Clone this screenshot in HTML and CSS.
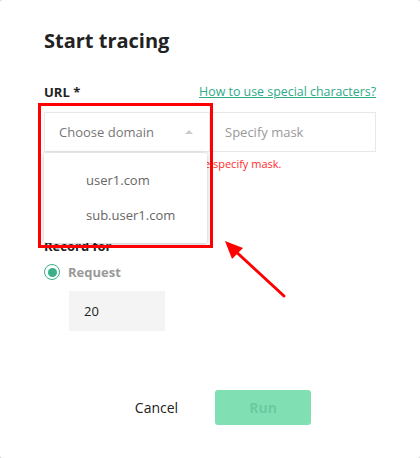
FILE: index.html
```html
<!DOCTYPE html>
<html>
<head>
<meta charset="utf-8">
<link rel="stylesheet" href="styles.css">
</head>
<body>
<div class="dialog">
  <h1 class="title">Start tracing</h1>
  <div class="url-row">
    <span class="label">URL *</span>
    <a class="help" href="#">How to use special characters?</a>
  </div>
  <div class="inputs">
    <div class="select">
      <span>Choose domain</span>
      <span class="caret"></span>
    </div>
    <div class="mask">Specify mask</div>
    <div class="dropdown">
      <div class="item">user1.com</div>
      <div class="item">sub.user1.com</div>
    </div>
    <div class="highlight"></div>
  </div>
  <div class="error">Please specify mask.</div>
  <div class="label record">Record for</div>
  <div class="radio-row">
    <span class="radio"><span class="dot"></span></span>
    <span class="radio-label">Request</span>
  </div>
  <div class="number">20</div>
  <div class="footer">
    <button class="cancel">Cancel</button>
    <button class="run">Run</button>
  </div>
  <svg class="arrow" width="80" height="70" viewBox="0 0 80 70">
    <line x1="62" y1="56" x2="10" y2="8" stroke="#ff0000" stroke-width="3" stroke-linecap="round"/>
    <polygon points="3,1 21,8 10,19" fill="#ff0000"/>
  </svg>
</div>
</body>
</html>
```
FILE: styles.css
```css
html, body {
  margin: 0;
  padding: 0;
  background: #d9d9d9;
}
.dialog {
  position: relative;
  width: 420px;
  height: 458px;
  box-sizing: border-box;
  background: #fff;
  border-radius: 3px;
  padding: 27px 44px 0 44px;
  font-family: "Open Sans", "Noto Sans", sans-serif;
  display: flex;
  flex-direction: column;
}
.title {
  margin: 0;
  font-size: 20px;
  font-weight: 700;
  line-height: 28px;
  color: #222;
}
.url-row {
  margin-top: 28px;
  display: flex;
  justify-content: space-between;
  align-items: center;
  height: 18px;
}
.label {
  font-size: 13px;
  font-weight: 700;
  color: #222;
  line-height: 18px;
}
.help {
  font-size: 12.4px;
  color: #2eaa87;
  text-decoration: underline;
  line-height: 18px;
}
.inputs {
  position: relative;
  margin-top: 11px;
  display: flex;
  height: 40px;
}
.select {
  width: 165px;
  box-sizing: border-box;
  border: 1px solid #e8e8e8;
  border-right: none;
  display: flex;
  align-items: center;
  justify-content: space-between;
  padding: 0 16px 0 14px;
  font-size: 13px;
  color: #777;
  box-shadow: 0 1px 3px rgba(0,0,0,0.08);
}
.caret {
  width: 0;
  height: 0;
  border-left: 4px solid transparent;
  border-right: 4px solid transparent;
  border-bottom: 4px solid #ccc;
}
.mask {
  flex: 1;
  box-sizing: border-box;
  border: 1px solid #e8e8e8;
  display: flex;
  align-items: center;
  padding-left: 15px;
  font-size: 13px;
  color: #999;
}
.dropdown {
  position: absolute;
  left: 0;
  top: 41px;
  width: 163px;
  height: 90px;
  background: #fff;
  border-radius: 2px;
  box-shadow: 0 1px 4px rgba(0,0,0,0.25);
  padding-top: 10px;
  box-sizing: border-box;
  z-index: 2;
}
.item {
  height: 35px;
  line-height: 35px;
  padding-left: 42px;
  font-size: 13px;
  color: #666;
}
.highlight {
  position: absolute;
  left: -6px;
  top: -9px;
  width: 175px;
  height: 145px;
  box-sizing: border-box;
  border: 3px solid #ff0000;
  z-index: 3;
}
.error {
  margin-top: 4px;
  margin-left: 133px;
  font-size: 11px;
  line-height: 16px;
  color: #ff2a2a;
}
.record {
  margin-top: 65px;
}
.radio-row {
  margin-top: 8px;
  display: flex;
  align-items: center;
  height: 18px;
}
.radio {
  width: 16px;
  height: 16px;
  box-sizing: border-box;
  border: 1.5px solid #3aaf8a;
  border-radius: 50%;
  display: flex;
  align-items: center;
  justify-content: center;
}
.dot {
  width: 9px;
  height: 9px;
  border-radius: 50%;
  background: #3aaf8a;
}
.radio-label {
  margin-left: 8px;
  font-size: 13px;
  font-weight: 700;
  color: #999;
}
.number {
  margin-top: 10px;
  margin-left: 25px;
  width: 96px;
  height: 40px;
  background: #f4f4f4;
  box-sizing: border-box;
  padding-left: 15px;
  display: flex;
  align-items: center;
  font-size: 13px;
  color: #222;
}
.footer {
  margin-top: 59px;
  display: flex;
  justify-content: center;
  align-items: center;
  gap: 37px;
  padding-left: 26px;
}
.cancel {
  border: none;
  background: none;
  padding: 0;
  font-family: inherit;
  font-size: 14px;
  color: #222;
}
.run {
  width: 96px;
  height: 35px;
  border: none;
  border-radius: 3px;
  background: #80e0b4;
  font-family: inherit;
  font-size: 14px;
  font-weight: 700;
  color: #6ec9a0;
}
.arrow {
  position: absolute;
  left: 222px;
  top: 240px;
}
```
